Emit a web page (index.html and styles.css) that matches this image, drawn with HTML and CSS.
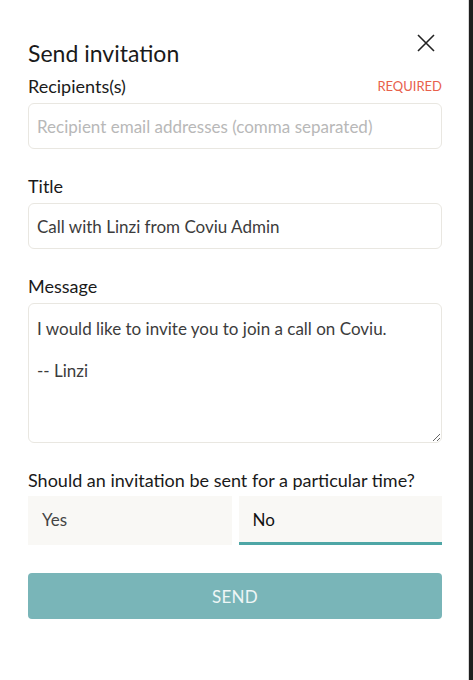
FILE: index.html
```html
<!DOCTYPE html>
<html lang="en">
<head>
    <meta charset="UTF-8">
    <meta name="viewport" content="width=device-width, initial-scale=1.0">
    <title>Send invitation</title>
    <link rel="stylesheet" href="styles.css">
</head>
<body>
    <div class="modal">
        <div class="header">
            <h1 class="title">Send invitation</h1>
            <button class="close-btn" aria-label="Close">
                <svg width="18" height="18" viewBox="0 0 18 18">
                    <path d="M1 1 L17 17 M17 1 L1 17" stroke="#222" stroke-width="1.6" fill="none"/>
                </svg>
            </button>
        </div>

        <div class="form-group">
            <div class="label-row">
                <label for="recipients">Recipients(s)</label>
                <span class="required">REQUIRED</span>
            </div>
            <input type="text" id="recipients" placeholder="Recipient email addresses (comma separated)">
        </div>

        <div class="form-group">
            <div class="label-row">
                <label for="title">Title</label>
            </div>
            <input type="text" id="title" value="Call with Linzi from Coviu Admin">
        </div>

        <div class="form-group">
            <div class="label-row">
                <label for="message">Message</label>
            </div>
            <textarea id="message">I would like to invite you to join a call on Coviu.

-- Linzi</textarea>
        </div>

        <div class="form-group">
            <div class="label-row">
                <label>Should an invitation be sent for a particular time?</label>
            </div>
            <div class="toggle">
                <button class="toggle-option">Yes</button>
                <button class="toggle-option active">No</button>
            </div>
        </div>

        <button class="send-btn">SEND</button>
    </div>
</body>
</html>
```

FILE: styles.css
```css
* {
    margin: 0;
    padding: 0;
    box-sizing: border-box;
}

body {
    font-family: Lato, 'Open Sans', sans-serif;
    background: #1e1e1e;
    height: 100vh;
    overflow: hidden;
}

.modal {
    width: 469px;
    height: 100vh;
    background: #fff;
    border-right: 1px solid #d8d8d8;
    padding: 39px 26px 0 28px;
}

.header {
    display: flex;
    justify-content: space-between;
    align-items: flex-start;
    margin-bottom: 8px;
}

.title {
    font-size: 23px;
    font-weight: 400;
    line-height: 28px;
    color: #1a1a1a;
}

.close-btn {
    background: none;
    border: none;
    margin-top: -5px;
    margin-right: 7px;
    cursor: pointer;
    display: flex;
}

.form-group {
    margin-bottom: 26px;
}

.label-row {
    display: flex;
    justify-content: space-between;
    align-items: center;
    margin-bottom: 6px;
}

.label-row label {
    font-size: 18px;
    line-height: 22px;
    color: #1a1a1a;
}

.required {
    font-size: 13px;
    color: #e8604c;
}

.form-group input,
.form-group textarea {
    display: block;
    width: 100%;
    font-family: inherit;
    font-size: 17px;
    color: #3c3c3c;
    border: 1px solid #e9e7e1;
    border-radius: 6px;
    background: #fff;
    padding: 0 8px;
    outline: none;
}

.form-group input {
    height: 46px;
}

.form-group input::placeholder {
    color: #b8b8b8;
}

.form-group textarea {
    height: 140px;
    line-height: 21px;
    padding-top: 14px;
    resize: vertical;
}

.toggle {
    display: flex;
    gap: 7px;
    margin-top: -1px;
}

.toggle-option {
    flex: 1;
    height: 49px;
    background: #f9f8f5;
    border: none;
    border-bottom: 3px solid transparent;
    font-family: inherit;
    font-size: 17px;
    color: #444;
    text-align: left;
    padding: 0 14px;
    cursor: pointer;
}

.toggle-option.active {
    color: #111;
    border-bottom-color: #4ea6a6;
}

.send-btn {
    display: block;
    width: 100%;
    height: 46px;
    margin-top: 28px;
    background: #79b5b8;
    border: none;
    border-radius: 4px;
    color: #eef6f6;
    font-family: inherit;
    font-size: 17px;
    letter-spacing: 0.3px;
    cursor: pointer;
}
```
